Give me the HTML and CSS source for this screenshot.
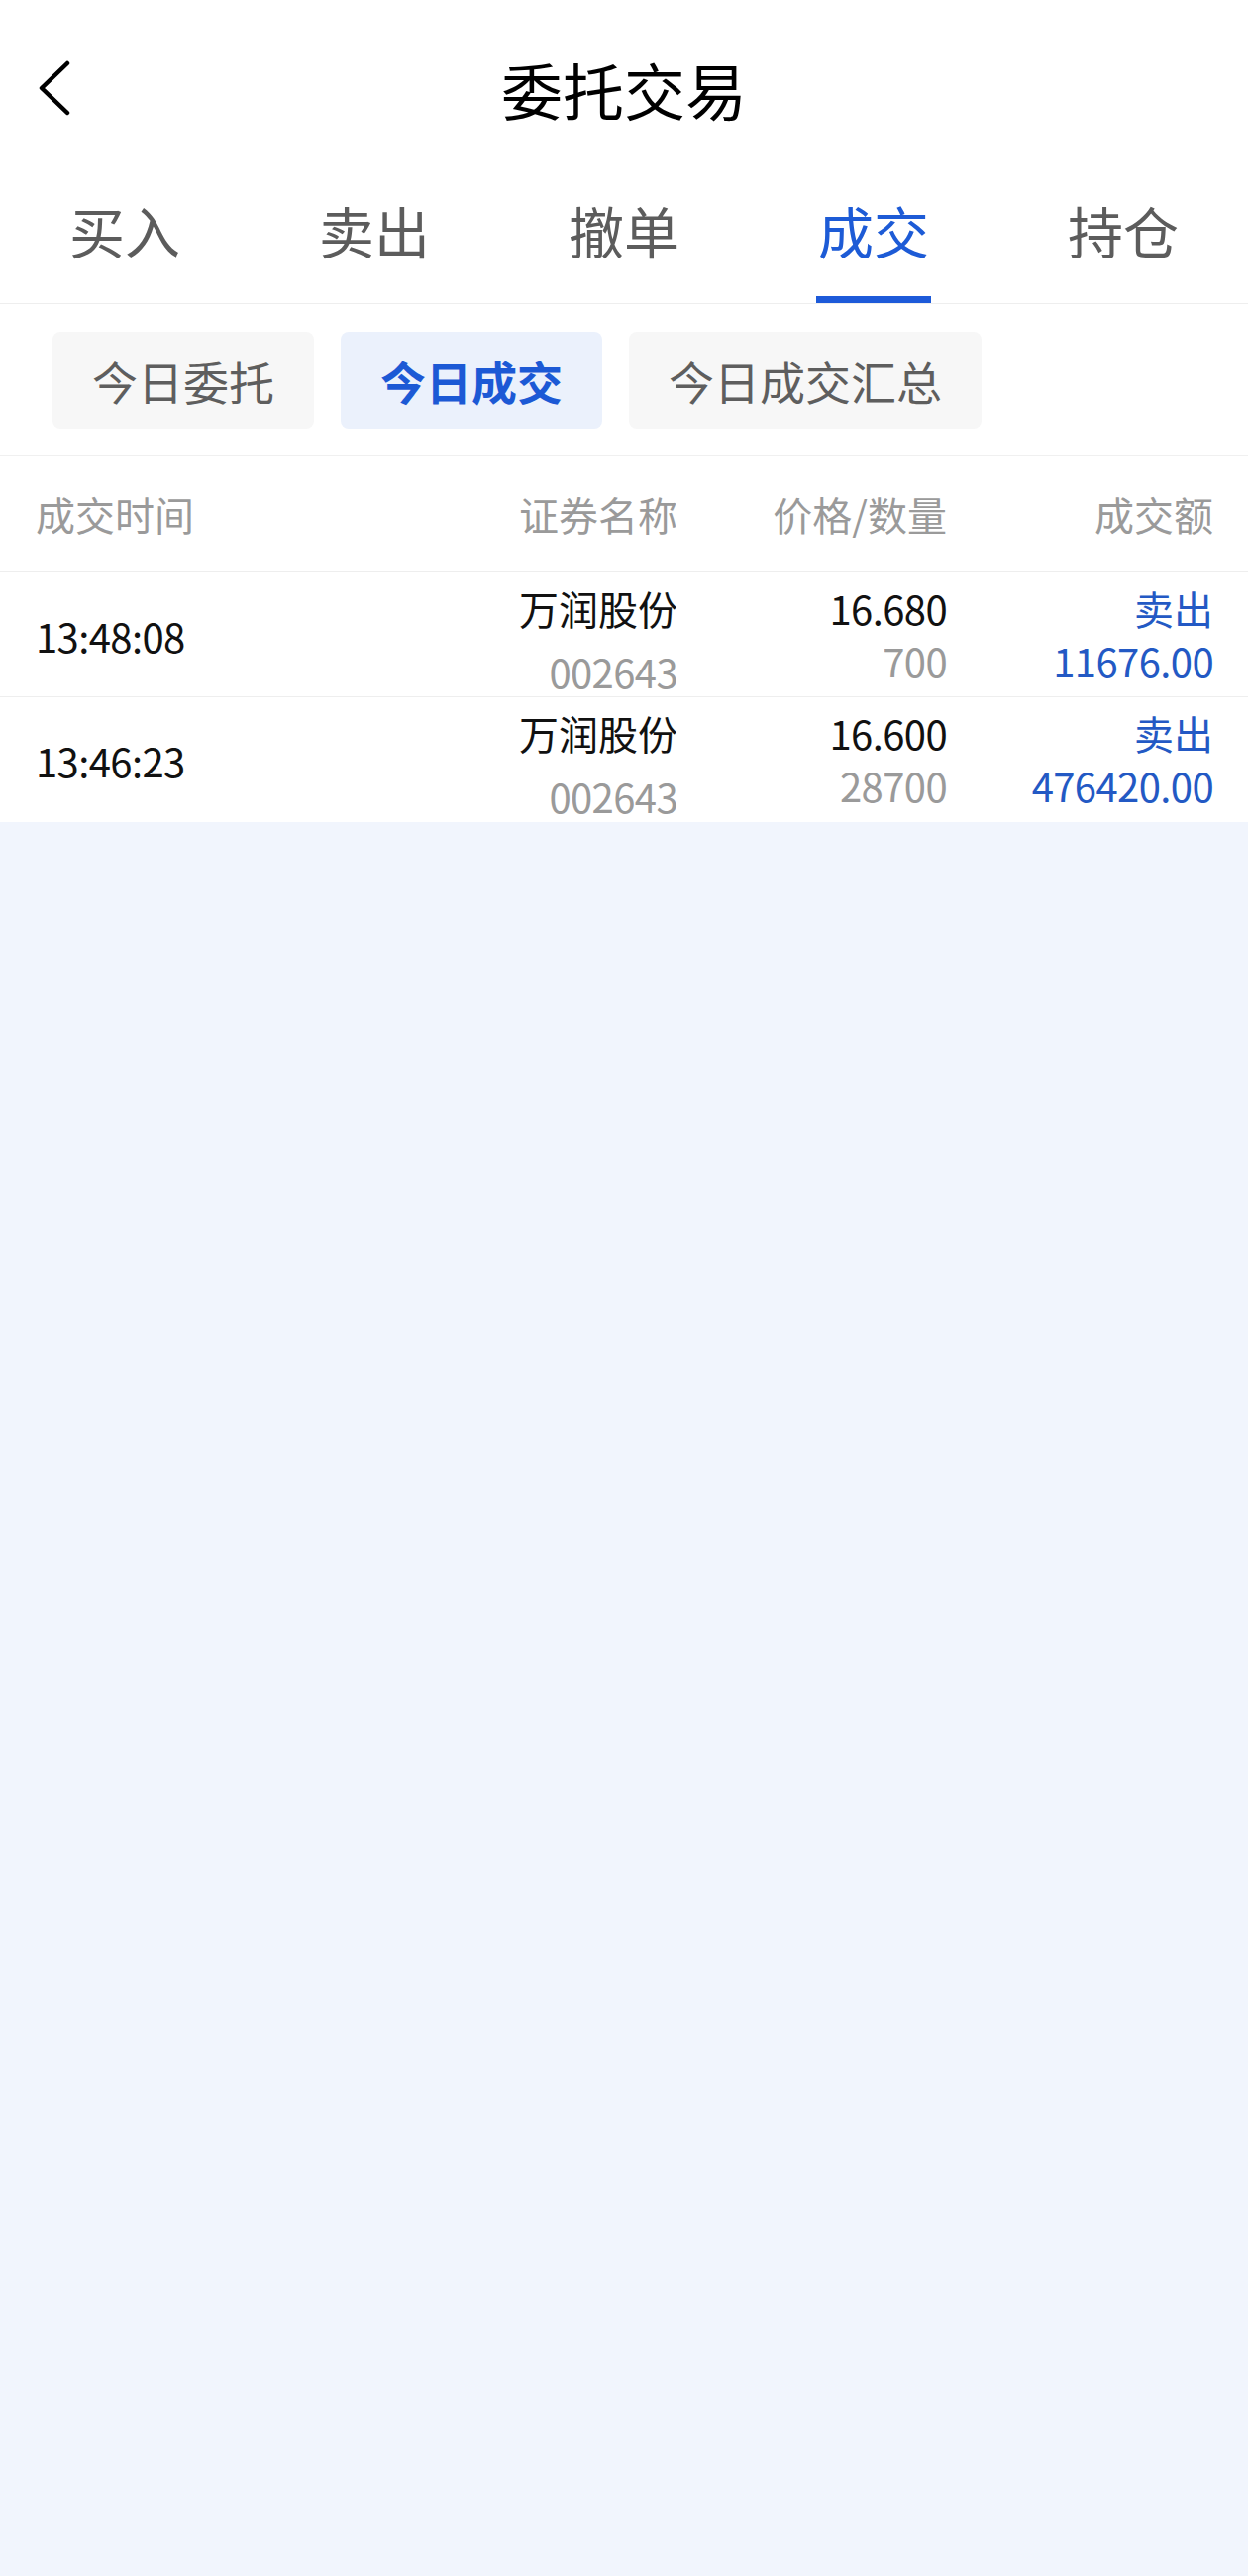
FILE: index.html
```html
<!DOCTYPE html>
<html lang="zh-CN">
<head>
    <meta charset="UTF-8">
    <meta name="viewport" content="width=device-width, initial-scale=1.0">
    <title>委托交易</title>
    <link rel="stylesheet" href="styles.css">
</head>
<body>
    <div class="page">
        <!-- top bar -->
        <div class="navbar">
            <div class="nav-left">
                <svg class="back" viewBox="0 0 40 60" width="40" height="60">
                    <polyline points="29,4 3,29 29,54" fill="none" stroke="#000" stroke-width="4.5" stroke-linecap="round" stroke-linejoin="round"/>
                </svg>
            </div>
            <div class="nav-title">委托交易</div>
            <div class="nav-right"></div>
        </div>

        <!-- main tabs -->
        <div class="tabs">
            <div class="tab"><span>买入</span></div>
            <div class="tab"><span>卖出</span></div>
            <div class="tab"><span>撤单</span></div>
            <div class="tab active"><span>成交</span></div>
            <div class="tab"><span>持仓</span></div>
        </div>

        <!-- sub tabs -->
        <div class="chips">
            <div class="chip">今日委托</div>
            <div class="chip active">今日成交</div>
            <div class="chip">今日成交汇总</div>
        </div>

        <!-- deal list -->
        <div class="table">
            <div class="thead">
                <div class="c-time">成交时间</div>
                <div class="c-name">证券名称</div>
                <div class="c-price">价格/数量</div>
                <div class="c-amount">成交额</div>
            </div>
            <div class="row">
                <div class="c-time num">13:48:08</div>
                <div class="c-name">
                    <div class="main">万润股份</div>
                    <div class="sub code num">002643</div>
                </div>
                <div class="c-price num">
                    <div class="main">16.680</div>
                    <div class="sub">700</div>
                </div>
                <div class="c-amount blue">
                    <div class="main">卖出</div>
                    <div class="sub num">11676.00</div>
                </div>
            </div>
            <div class="row">
                <div class="c-time num">13:46:23</div>
                <div class="c-name">
                    <div class="main">万润股份</div>
                    <div class="sub code num">002643</div>
                </div>
                <div class="c-price num">
                    <div class="main">16.600</div>
                    <div class="sub">28700</div>
                </div>
                <div class="c-amount blue">
                    <div class="main">卖出</div>
                    <div class="sub num">476420.00</div>
                </div>
            </div>
        </div>
    </div>
</body>
</html>
```

FILE: styles.css
```css
body {
    margin: 0;
    padding: 0;
    background-color: #f1f5fd;
    font-family: "Noto Sans CJK SC", "Noto Sans", sans-serif;
    color: #111;
}
.page {
    min-height: 100vh;
}

/* top bar */
.navbar {
    display: grid;
    grid-template-columns: 1fr auto 1fr;
    align-items: center;
    height: 180px;
    background-color: #fff;
}
.nav-left {
    padding-left: 39px;
    display: flex;
    align-items: center;
}
.back {
    display: block;
}
.nav-title {
    font-size: 62px;
    line-height: 1;
    color: #000;
}

/* main tabs */
.tabs {
    display: grid;
    grid-template-columns: repeat(5, 1fr);
    background-color: #fff;
    border-bottom: 1px solid #eeeeee;
}
.tab {
    display: flex;
    justify-content: center;
    padding-top: 24px;
    font-size: 56px;
    line-height: 56px;
    color: #5c5c5c;
}
.tab span {
    display: block;
    padding: 0 2px 39px;
    border-bottom: 7px solid transparent;
}
.tab.active {
    color: #1d5bd6;
}
.tab.active span {
    border-bottom-color: #1d5ad9;
}

/* sub tabs */
.chips {
    display: flex;
    gap: 27px;
    padding: 28px 53px 26px;
    background-color: #fff;
    border-bottom: 1px solid #f0f0f0;
}
.chip {
    height: 98px;
    padding: 0 40px;
    display: flex;
    align-items: center;
    font-size: 46px;
    color: #5e5e5e;
    background-color: #f7f7f7;
    border-radius: 8px;
}
.chip.active {
    background-color: #ebf1fc;
    color: #1c59d5;
    font-weight: bold;
}

/* table */
.table {
    background-color: #fff;
}
.thead,
.row {
    display: grid;
    grid-template-columns: 320px 328px 272px 1fr;
    padding: 0 35px 0 36px;
    font-size: 40px;
}
.thead {
    height: 117px;
    align-items: center;
    color: #9a9a9a;
    border-bottom: 1px solid #eeeeee;
}
.row {
    height: 126px;
    box-sizing: border-box;
    padding-top: 10px;
    align-items: start;
    border-bottom: 1px solid #eeeeee;
}
.row:last-child {
    border-bottom: none;
}
.c-name,
.c-price,
.c-amount {
    text-align: right;
}
.row .c-time {
    align-self: center;
    margin-top: -10px;
    color: #111;
}
.num {
    letter-spacing: -0.6px;
}
.main,
.sub {
    line-height: 53px;
    white-space: nowrap;
}
.main {
    color: #111;
}
.sub {
    color: #9a9a9a;
}
.sub.code {
    margin-top: 11px;
}
.blue .main,
.blue .sub {
    color: #2359c4;
}
```
